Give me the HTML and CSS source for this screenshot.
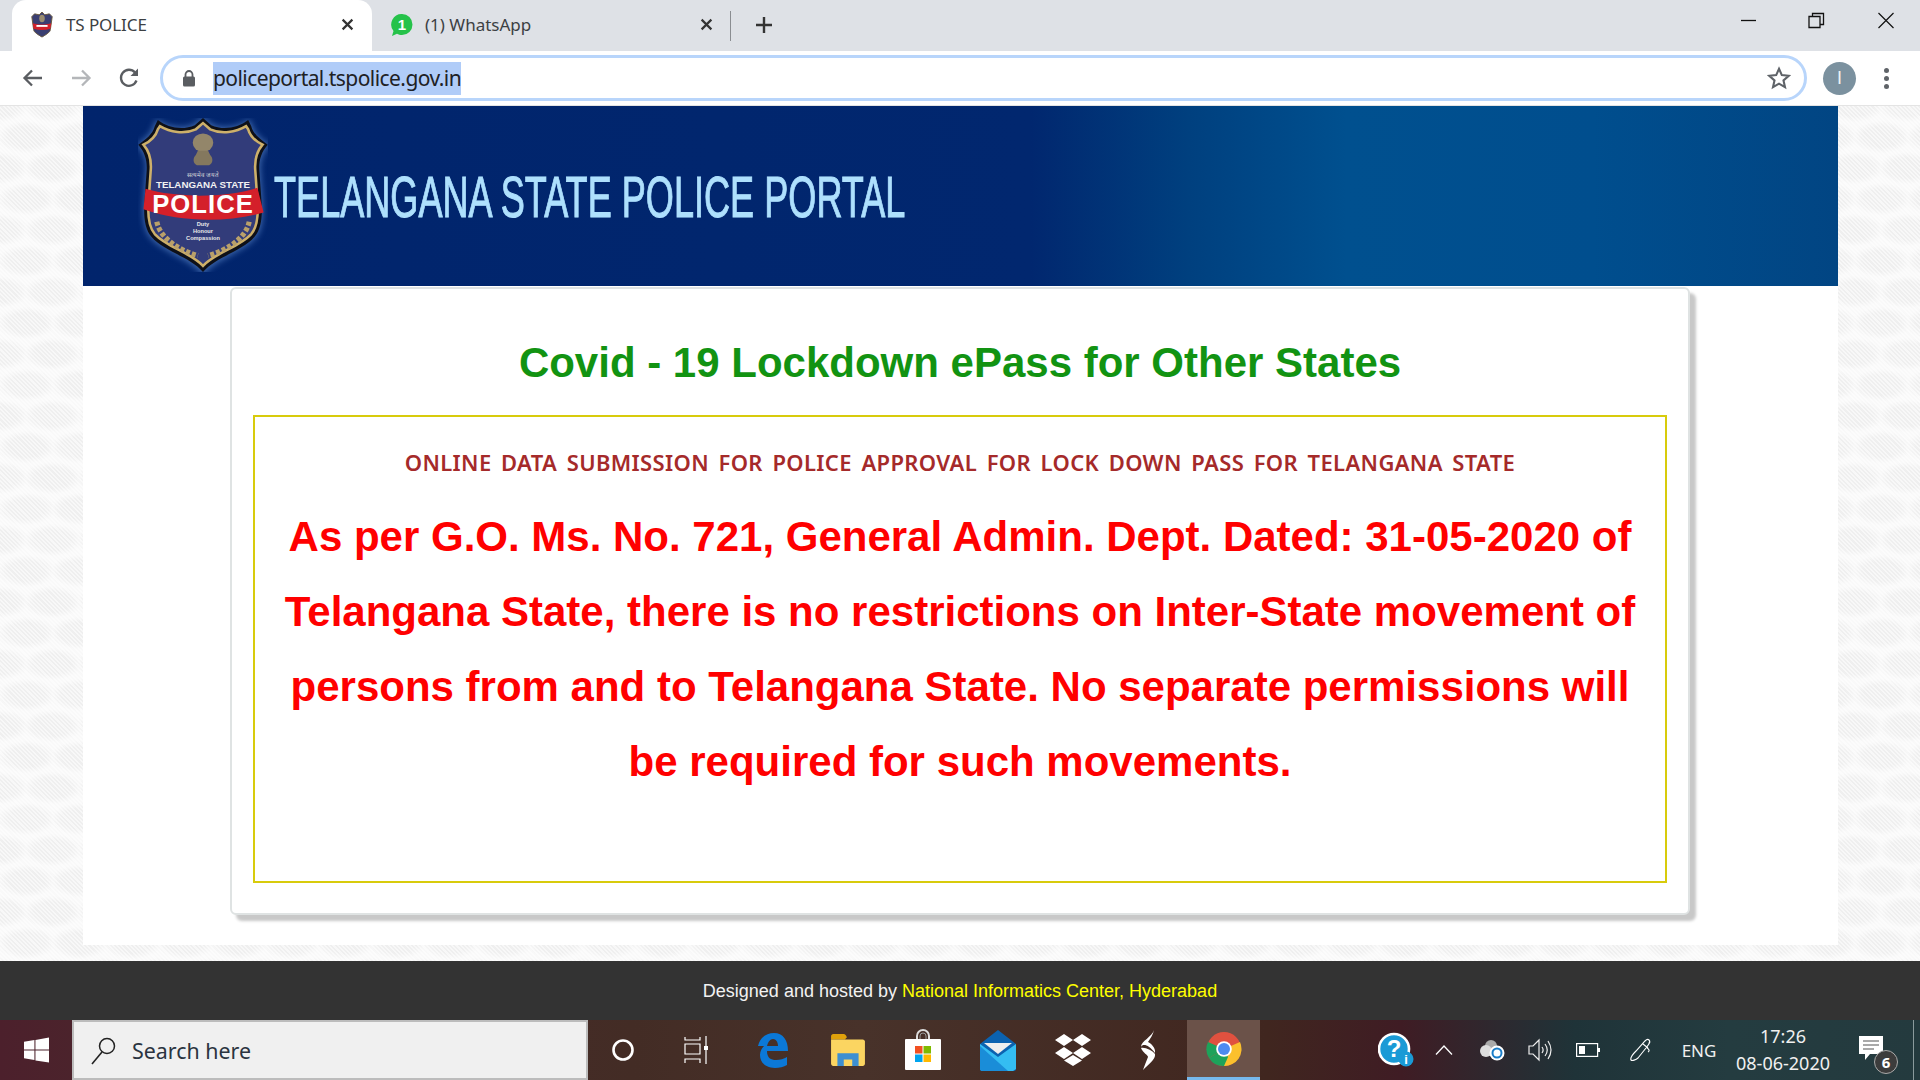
FILE: index.html
```html
<!DOCTYPE html>
<html lang="en">
<head>
<meta charset="utf-8">
<title>TS POLICE</title>
<link rel="stylesheet" href="styles.css">
</head>
<body>
<header class="tabstrip">
  <div class="tab tab-active">
    <svg class="fav" viewBox="0 0 24 28"><path d="M12 0l3 3 5-1 3 3-2 14c0 3-6 6-9 8-3-2-9-5-9-8L1 5l3-3 5 1z" fill="#3a3f72" stroke="#6b5a3c"/><ellipse cx="12" cy="7" rx="3" ry="4" fill="#9a8c70"/><path d="M2 12c6 2 14 2 20 0l-1 6c-6 2-12 2-18 0z" fill="#d3212a"/><path d="M6 15h12" stroke="#fff" stroke-width="2"/></svg>
    <span class="tab-title">TS POLICE</span>
    <svg class="tab-x" viewBox="0 0 12 12"><path d="M1.5 1.5l9 9M10.5 1.5l-9 9" stroke="#333" stroke-width="2"/></svg>
  </div>
  <div class="tab tab-idle">
    <svg class="fav" viewBox="0 0 24 24"><path d="M12 1a10.5 10.5 0 0 1 0 21c-2 0-3.500-.5-5-1.300L2 23l1.500-5A10.500 10.500 0 0 1 12 1z" fill="#25c24a"/><text x="12" y="17" class="fav-num">1</text></svg>
    <span class="tab-title">(1) WhatsApp</span>
    <svg class="tab-x" viewBox="0 0 12 12"><path d="M1.5 1.500l9 9M10.500 1.500l-9 9" stroke="#333" stroke-width="2"/></svg>
  </div>
  <i class="tab-sep"></i>
  <svg class="tab-plus" viewBox="0 0 18 18"><path d="M9 1v16M1 9h16" stroke="#333" stroke-width="2.400"/></svg>
  <div class="winctl">
    <svg viewBox="0 0 68 20" class="win-i"><path d="M25 10.500h15" stroke="#111" stroke-width="1.300"/></svg>
    <svg viewBox="0 0 68 20" class="win-i"><path d="M25 6.500h11v11H25zM28.500 6.500v-3h11v11H36" fill="none" stroke="#111" stroke-width="1.300"/></svg>
    <svg viewBox="0 0 68 20" class="win-i"><path d="M26.500 3l15 15M41.500 3l-15 15" stroke="#111" stroke-width="1.200"/></svg>
  </div>
</header>

<nav class="toolbar">
  <svg class="nav-i" viewBox="0 0 24 24"><path d="M21 12H4M11 4.500L3.500 12l7.500 7.500" fill="none" stroke="#5a5d61" stroke-width="2.300"/></svg>
  <svg class="nav-i" viewBox="0 0 24 24"><path d="M3 12h17M13 4.500l7.500 7.500-7.500 7.500" fill="none" stroke="#b4b6b9" stroke-width="2.300"/></svg>
  <svg class="nav-i" viewBox="0 0 24 24"><path d="M19.500 14.500A8 8 0 1 1 18 6.500" fill="none" stroke="#5a5d61" stroke-width="2.300"/><path d="M21 2.500V10h-7.500z" fill="#5a5d61"/></svg>
  <div class="omnibox">
    <svg class="lock" viewBox="0 0 14 18"><path d="M3.500 8V5.500a3.500 3.500 0 0 1 7 0V8" fill="none" stroke="#5a5d61" stroke-width="1.800"/><rect x="1" y="7.500" width="12" height="10" rx="1.500" fill="#5a5d61"/></svg>
    <span class="url">policeportal.tspolice.gov.in</span>
    <svg class="star" viewBox="0 0 24 24"><path d="M12 2.800l2.800 6.300 6.900.7-5.200 4.600 1.500 6.800-6-3.500-6 3.500 1.500-6.800-5.200-4.600 6.900-.7z" fill="none" stroke="#5f6368" stroke-width="2.100"/></svg>
  </div>
  <div class="avatar">I</div>
  <div class="dots"><i></i><i></i><i></i></div>
</nav>

<div class="viewport">
  <div class="sheet">
    <div class="banner">
      <svg class="crest" viewBox="2 1 126 150">
        <defs><filter id="glow" x="-15%" y="-15%" width="130%" height="130%"><feGaussianBlur stdDeviation="3"/></filter></defs>
        <path d="M65 0l9 7c10 5 26 3 36-5l3 6c2 8 9 14 17 19-7 8-10 17-9 27l2 28c1 14 0 28-7 36-12 14-38 20-51 36-13-16-39-22-51-36-7-8-8-22-7-36l2-28C11 44 8 35 0 27 8 22 15 16 17 8l3-6c10 8 26 10 36 5z" fill="#6f9ee0" opacity=".55" filter="url(#glow)"/>
        <path d="M65 1l8 7c11 5 26 3 36-5l3 6c2 8 9 13 16 18-7 8-9 17-8 27l2 28c1 14 0 27-7 35-12 14-37 19-50 34-13-15-38-20-50-34-7-8-8-21-7-35l2-28c1-10-1-19-8-27 7-5 14-10 16-18l3-6c10 8 25 10 36 5z" fill="#0e1018"/>
        <path d="M65 6l7 6c11 5 25 3 35-3l2 3c2 7 8 12 14 15-6 7-8 16-7 26l2 29c1 13 0 25-6 32-12 13-35 18-47 31-12-13-35-18-47-31-6-7-7-19-6-32l2-29c1-10-1-19-7-26 6-3 12-8 14-15l2-3c10 6 24 8 35 3z" fill="#323c7a" stroke="#cdb06a" stroke-width="2.500"/>
        <ellipse cx="65" cy="25" rx="10" ry="9" fill="#93866a"/>
        <path d="M60 33h10l2 4c3 3 3 8-1 10H59c-4-2-4-7-1-10z" fill="#84785e"/>
        <text x="65" y="58" class="cr-hindi">सत्यमेव जयते</text>
        <text x="65" y="69" class="cr-state">TELANGANA STATE</text>
        <path d="M9 70c30 9 80 9 109 -1l6 24c-35 10-80 10-117 -3z" fill="#d4202a"/>
        <text x="65" y="94" class="cr-police">POLICE</text>
        <text x="65" y="106" class="cr-small">Duty</text>
        <text x="65" y="113" class="cr-small">Honour</text>
        <text x="65" y="120" class="cr-small">Compassion</text>
        <path d="M20 102c3 16 22 28 40 33M110 102c-3 16-22 28-40 33" fill="none" stroke="#b9a06a" stroke-width="5" stroke-dasharray="4 2"/>
      </svg>
      <h1 class="banner-title">TELANGANA STATE POLICE PORTAL</h1>
    </div>
    <main class="card">
      <h2 class="card-title">Covid - 19 Lockdown ePass for Other States</h2>
      <section class="notice">
        <h3 class="notice-sub">ONLINE DATA SUBMISSION FOR POLICE APPROVAL FOR LOCK DOWN PASS FOR TELANGANA STATE</h3>
        <p class="notice-body">As per G.O. Ms. No. 721, General Admin. Dept. Dated: 31-05-2020 of Telangana State, there is no restrictions on Inter-State movement of persons from and to Telangana State. No separate permissions will be required for such movements.</p>
      </section>
    </main>
  </div>
</div>

<footer class="sitefoot">Designed and hosted by&nbsp;<span class="nic">National Informatics Center, Hyderabad</span></footer>

<div class="taskbar">
  <div class="start">
    <svg viewBox="0 0 24 24"><path d="M0 4l10-1.500V11.500H0zM11 2.300L24 0v11.500H11zM0 12.500h10v9L0 20zM11 12.500h13V24l-13-2z" fill="#fff"/></svg>
  </div>
  <div class="search">
    <svg viewBox="0 0 26 30"><circle cx="16" cy="10" r="7.500" fill="none" stroke="#222" stroke-width="1.500"/><path d="M11 16L1 28" stroke="#222" stroke-width="1.600"/></svg>
    <span>Search here</span>
  </div>
  <div class="slot s70"><svg class="ic24" viewBox="0 0 24 24"><circle cx="12" cy="12" r="9.500" fill="none" stroke="#fff" stroke-width="2.600"/></svg></div>
  <div class="slot s78"><svg class="ic28" viewBox="0 0 26 28"><path d="M1 1v3h15V1M1 8h15v10H1zM1 27v-4h15v4" fill="none" stroke="#fff" stroke-width="1.200"/><path d="M22 0v10M22 14v14" stroke="#fff" stroke-width="1.200"/><rect x="20" y="10" width="4" height="4" fill="#fff"/></svg></div>
  <div class="slot s74"><svg class="ic36" viewBox="0 0 32 36"><path d="M1 14C3 5 10 1 17 1c9 0 14 7 14 18H10c0 7 4 9 9 9 4 0 8-1 11-3v8c-3 2-8 3-12 3C9 36 3 31 3 23c0-4 2-7 4-9-2 0-4 0-6 0zM10 14h11c0-4-2-7-5-7-3 0-5 3-6 7z" fill="#0b78d7"/></svg></div>
  <div class="slot s76"><svg class="ic36" viewBox="0 0 34 32"><path d="M1 3c0-1 1-2 2-2h10c1 0 2 1 3 3l-2 2H1z" fill="#e0a10b"/><path d="M1 6h30c1 0 2 1 2 2v21c0 1-1 2-2 2H3c-1 0-2-1-2-2z" fill="#fbd561"/><path d="M7 31V19h20v12h-6v-6h-8v6z" fill="#3d8fd1"/></svg></div>
  <div class="slot s74"><svg class="ic40" viewBox="0 0 36 42"><path d="M12 10V7a6 6 0 0 1 12 0v3" fill="none" stroke="#ddd" stroke-width="2"/><path d="M15 10V7a3 3 0 0 1 6 0v3" fill="none" stroke="#999" stroke-width="1"/><rect y="10" width="36" height="31" rx="1" fill="#fff"/><rect x="10" y="17" width="7.500" height="7.500" fill="#f25022"/><rect x="18.500" y="17" width="7.500" height="7.500" fill="#7fba00"/><rect x="10" y="25.500" width="7.500" height="7.500" fill="#00a4ef"/><rect x="18.500" y="25.500" width="7.500" height="7.500" fill="#ffb900"/></svg></div>
  <div class="slot s76"><svg class="ic40" viewBox="0 0 36 42"><path d="M0 15L18 1l18 14v25c0 1-1 2-2 2H2c-1 0-2-1-2-2z" fill="#0b62b0"/><path d="M4 14h28l-14 11z" fill="#eee"/><path d="M0 15l18 13 18-13v25L33 42H2l-2-2z" fill="#34bdf2"/><path d="M0 17l28 25H2c-1 0-2-1-2-2z" fill="#1a8dd8"/></svg></div>
  <div class="slot s74"><svg class="ic36" viewBox="0 0 36 32"><path d="M9 0l9 6-9 6-9-6zM27 0l9 6-9 6-9-6zM9 13l9 6-9 6-9-6zM27 13l9 6-9 6-9-6zM18 21l9 5.500-9 5.500-9-5.500z" fill="#fff"/></svg></div>
  <div class="slot s77"><svg class="ic44" viewBox="0 0 18 42"><path d="M14 1C12 8 1 12 1 18c2-4 8-2 14 6 1-6-5-10-7-11 2-3 5-7 6-12z" fill="#fff"/><path d="M15 25c-2-3-10-7-14-6 2 5 7 7 7 9-2 5-4 10-5 13 5-5 13-11 12-16z" fill="#fff"/></svg></div>
  <div class="slot chrome-slot"><svg class="ic36" viewBox="0 0 36 36"><circle cx="18" cy="18" r="17" fill="#e0513f"/><path d="M18 18L3 27a17 17 0 0 1-1-16z" fill="#1da25a"/><path d="M18 18l16-7a17 17 0 0 1-16 24 z" fill="#fbc02d"/><path d="M18 18L3 27a17 17 0 0 0 15 8l4-9z" fill="#1da25a"/><circle cx="18" cy="18" r="7.800" fill="#fff"/><circle cx="18" cy="18" r="6" fill="#4c8bf0"/></svg></div>
  <div class="tb-fill"></div>
  <div class="tray">
    <div class="tslot t48"><svg class="ic36" viewBox="0 0 36 36"><circle cx="16" cy="17" r="15" fill="#1a9ad6" stroke="#fff" stroke-width="2.600"/><text x="16" y="25" class="help-q">?</text><circle cx="28" cy="27" r="7.500" fill="#1a9ad6"/><text x="28" y="32" class="help-i">i</text></svg></div>
    <div class="tslot t48"><svg class="ic18" viewBox="0 0 18 10"><path d="M1 9.500L9 1l8 8.500" fill="none" stroke="#fff" stroke-width="1.300"/></svg></div>
    <div class="tslot t48"><svg class="ic26" viewBox="0 0 26 24"><circle cx="12" cy="8" r="6" fill="#aaa"/><circle cx="7" cy="13" r="6" fill="#ddd"/><circle cx="18" cy="15" r="7.500" fill="#fff"/><circle cx="18" cy="15" r="4.500" fill="none" stroke="#1a7dc8" stroke-width="2"/></svg></div>
    <div class="tslot t48"><svg class="ic24" viewBox="0 0 24 24"><path d="M1 8h4l6-6v20l-6-6H1z" fill="none" stroke="#eee" stroke-width="1.200"/><path d="M14 9c1.500 2 1.500 4 0 6M17 6c3 4 3 8 0 12M20 3c4 6 4 12 0 18" fill="none" stroke="#eee" stroke-width="1.200"/></svg></div>
    <div class="tslot t48"><svg class="ic24" viewBox="0 0 24 14"><rect x=".6" y=".6" width="21" height="12.800" fill="none" stroke="#fff" stroke-width="1.200"/><rect x="3" y="3" width="6" height="8" fill="#fff"/><rect x="22" y="5" width="2" height="4" fill="#fff"/></svg></div>
    <div class="tslot t58"><svg class="ic24" viewBox="0 0 24 24"><path d="M20 2c2 2 0 4-3 8l-8 10c-2 2-6 3-7 2-1-2 2-6 5-9l9-10c1-1 3-2 4-1zM14 6l5 4M18 10c2 1 3 3 1 4" fill="none" stroke="#fff" stroke-width="1.100"/></svg></div>
    <div class="tslot t58 lang">ENG</div>
    <div class="tslot t110 clock"><span>17:26</span><span>08-06-2020</span></div>
    <div class="tslot t68 notif">
      <svg class="ic30" viewBox="0 0 26 28"><path d="M0 0h24v18H11l-5 6v-6H0z" fill="#fff"/><path d="M4 5h16M4 9h16M4 13h11" stroke="#555" stroke-width="1.200"/></svg>
      <span class="notif-n">6</span>
    </div>
    <div class="peek"></div>
  </div>
</div>
</body>
</html>
```
FILE: styles.css
```css
* { box-sizing: border-box; }
html, body { margin: 0; padding: 0; }
body {
  width: 1920px;
  height: 1080px;
  overflow: hidden;
  display: flex;
  flex-direction: column;
  font-family: "Liberation Sans", Arial, sans-serif;
  background: #fff;
}

/* browser tabs */
.tabstrip {
  height: 51px;
  flex: none;
  display: flex;
  align-items: center;
  background: #dee1e6;
  padding-left: 12px;
  font-family: "Noto Sans", sans-serif;
  font-size: 17px;
  color: #3c4043;
}
.tab { height: 51px; width: 360px; display: flex; align-items: center; flex: none; padding-bottom: 2px; }
.tab-active { background: #fff; border-radius: 14px 14px 0 0; padding-left: 18px; padding-right: 18px; }
.tab-idle { width: 359px; padding-left: 18px; padding-right: 18px; }
.fav { width: 24px; height: 26px; flex: none; }
.fav-num { font: bold 15px "Liberation Sans", sans-serif; fill: #fff; text-anchor: middle; }
.tab-title { margin-left: 12px; flex: 1; }
.tab-idle .tab-title { margin-left: 11px; }
.tab-active .tab-title { letter-spacing: -.1px; }
.tab-x { width: 13px; height: 13px; flex: none; }
.tab-sep { width: 1px; height: 30px; background: #8a8d91; flex: none; margin-left: -1px; }
.tab-plus { width: 18px; height: 18px; margin-left: 24px; margin-bottom: 1px; flex: none; }
.winctl { margin-left: auto; display: flex; align-self: flex-start; margin-top: 10px; }
.win-i { width: 68px; height: 20px; flex: none; }

/* toolbar */
.toolbar {
  height: 55px;
  flex: none;
  display: flex;
  align-items: center;
  background: #fff;
  padding-left: 21px;
  border-bottom: 1px solid #e4e4e4;
}
.nav-i { width: 24px; height: 24px; flex: none; margin-right: 24px; }
.omnibox {
  margin-left: -5px;
  width: 1647px;
  height: 46px;
  flex: none;
  display: flex;
  align-items: center;
  border: 3px solid #b8d5fb;
  border-radius: 23px;
  padding: 0 13px 0 19px;
}
.lock { width: 14px; height: 18px; flex: none; }
.url {
  margin-left: 17px;
  background: #b0ccf8;
  font-family: "Noto Sans", sans-serif;
  font-size: 21px;
  line-height: 33px;
  color: #202124;
  letter-spacing: -.56px;
}
.star { width: 24px; height: 24px; margin-left: auto; flex: none; }
.avatar {
  margin-left: 16px;
  width: 33px;
  height: 33px;
  border-radius: 50%;
  background: #7b919f;
  color: #eef2f4;
  font-family: "Liberation Sans", sans-serif;
  font-size: 18px;
  display: flex;
  align-items: center;
  justify-content: center;
  flex: none;
}
.dots { margin-left: 28px; display: flex; flex-direction: column; gap: 3px; flex: none; }
.dots i { width: 5px; height: 5px; border-radius: 50%; background: #5f6368; }

/* page */
.viewport {
  flex: 1;
  min-height: 0;
  display: flex;
  justify-content: center;
  background-color: #f9f9f9;
  background-image:
    repeating-linear-gradient(45deg, rgba(255,255,255,.55) 0 1.500px, transparent 1.500px 3px),
    radial-gradient(ellipse 30px 16px at 50% 50%, #efefef 62%, transparent 100%),
    radial-gradient(ellipse 30px 16px at 50% 50%, #efefef 62%, transparent 100%);
  background-size: auto, 53px 62px, 53px 62px;
  background-position: 0 0, 0 0, 26px 31px;
}
.sheet {
  width: 1755px;
  height: 839px;
  background: #fff;
  display: flex;
  flex-direction: column;
  align-items: center;
}
.banner {
  width: 100%;
  height: 180px;
  flex: none;
  display: flex;
  align-items: center;
  padding-left: 55px;
  background: linear-gradient(90deg, #01246c 0%, #01276f 54%, #00407f 63%, #00508f 72%, #004e8e 86%, #014583 100%);
}
.crest { width: 130px; height: 154px; flex: none; margin-top: -2px; }
.cr-hindi { font: 6px "Noto Sans CJK SC", "DejaVu Sans", sans-serif; fill: #ddd; text-anchor: middle; }
.cr-state { font: bold 9.500px "Liberation Sans", sans-serif; fill: #f2f2f2; text-anchor: middle; }
.cr-police { font: bold 25px "Liberation Sans", sans-serif; fill: #fff; text-anchor: middle; letter-spacing: 1px; }
.cr-small { font: bold 5.500px "Liberation Sans", sans-serif; fill: #e8e8e8; text-anchor: middle; }
.banner-title {
  margin: 2px 0 0 6px;
  font-family: "Liberation Sans", sans-serif;
  font-weight: 400;
  font-size: 58px;
  line-height: 70px;
  color: #aee0fd;
  white-space: nowrap;
  transform: scaleX(.6225);
  transform-origin: left center;
  -webkit-text-stroke: 1px #aee0fd;
}
.card {
  width: 1460px;
  height: 628px;
  flex: none;
  margin-top: 1px;
  background: #fff;
  border: 2px solid #dfe3e3;
  border-radius: 6px;
  box-shadow: 6px 6px 3px #c8c8c8;
  padding: 0 21px;
  display: flex;
  flex-direction: column;
}
.card-title {
  margin: 44px 0 0;
  height: 60px;
  text-align: center;
  font-size: 42px;
  line-height: 60px;
  font-weight: bold;
  color: #129312;
}
.notice {
  margin-top: 22px;
  height: 468px;
  border: 2px solid #d8cb0c;
  text-align: center;
  padding: 31px 0 0;
}
.notice-sub {
  margin: 0;
  font-family: "Noto Sans", sans-serif;
  font-size: 22px;
  line-height: 28px;
  font-weight: 600;
  letter-spacing: .35px;
  word-spacing: 3.500px;
  color: #a52a2a;
}
.notice-body {
  margin: 23px 0 0;
  padding: 0 6px;
  font-size: 42px;
  line-height: 75px;
  font-weight: bold;
  color: #ff0000;
}
.sitefoot {
  height: 59px;
  flex: none;
  background: #333;
  color: #f2f2f2;
  font-size: 18px;
  padding-top: 2px;
  display: flex;
  align-items: center;
  justify-content: center;
}
.nic { color: #ffff00; }

/* taskbar */
.taskbar {
  height: 60px;
  flex: none;
  display: flex;
  background: linear-gradient(90deg, #4c202c 0%, #4a2a2c 12%, #432c25 33%, #48322a 45%, #40261f 66%, #3f1c24 73%, #1f3338 82%, #243c40 90%, #243a3e 100%);
  color: #fff;
  font-family: "Noto Sans", sans-serif;
}
.start { width: 72px; flex: none; display: flex; align-items: center; justify-content: center; }
.start svg { width: 25px; height: 30px; }
.search {
  width: 516px;
  flex: none;
  background: #f0f0f0;
  border: 2px solid #bcbcbc;
  display: flex;
  align-items: center;
  padding-left: 17px;
  padding-top: 1px;
  color: #2b3440;
  font-size: 21.400px;
}
.search svg { width: 26px; height: 30px; flex: none; }
.search span { margin-left: 15px; }
.slot { flex: none; display: flex; align-items: center; justify-content: center; }
.s70 { width: 70px; }
.s78 { width: 78px; }
.s74 { width: 74px; }
.s76 { width: 76px; }
.s77 { width: 77px; }
.chrome-slot { width: 73px; background: #6b5249; border-bottom: 3px solid #76b9ed; }
.ic18 { width: 18px; height: 10px; flex: none; }
.ic24 { width: 24px; height: 24px; flex: none; }
.ic26 { width: 26px; height: 24px; flex: none; }
.ic28 { width: 26px; height: 28px; flex: none; }
.ic30 { width: 26px; height: 28px; flex: none; }
.ic36 { width: 36px; height: 36px; flex: none; }
.ic40 { width: 36px; height: 42px; flex: none; }
.ic44 { width: 18px; height: 42px; flex: none; }
.tb-fill { flex: 1; }
.tray { display: flex; flex: none; }
.tslot { flex: none; display: flex; align-items: center; justify-content: center; }
.t48 { width: 48px; }
.t58 { width: 58px; }
.t68 { width: 68px; }
.t110 { width: 110px; }
.help-q { font: bold 24px "Liberation Sans", sans-serif; fill: #fff; text-anchor: middle; }
.help-i { font: bold 13px "Liberation Sans", sans-serif; fill: #fff; text-anchor: middle; }
.lang { font-size: 17px; color: #f0f0f0; }
.clock {
  flex-direction: column;
  font-size: 18px;
  line-height: 27px;
  color: #f0f0f0;
}
.notif { position: relative; }
.notif-n {
  position: absolute;
  left: 36px;
  top: 30px;
  width: 24px;
  height: 24px;
  border-radius: 50%;
  background: #3c3c3c;
  border: 1px solid #aaa;
  color: #fff;
  font-size: 15px;
  font-weight: 700;
  display: flex;
  align-items: center;
  justify-content: center;
}
.peek { width: 7px; flex: none; margin-left: 7px; border-left: 1px solid #8a9a9c; }
```
